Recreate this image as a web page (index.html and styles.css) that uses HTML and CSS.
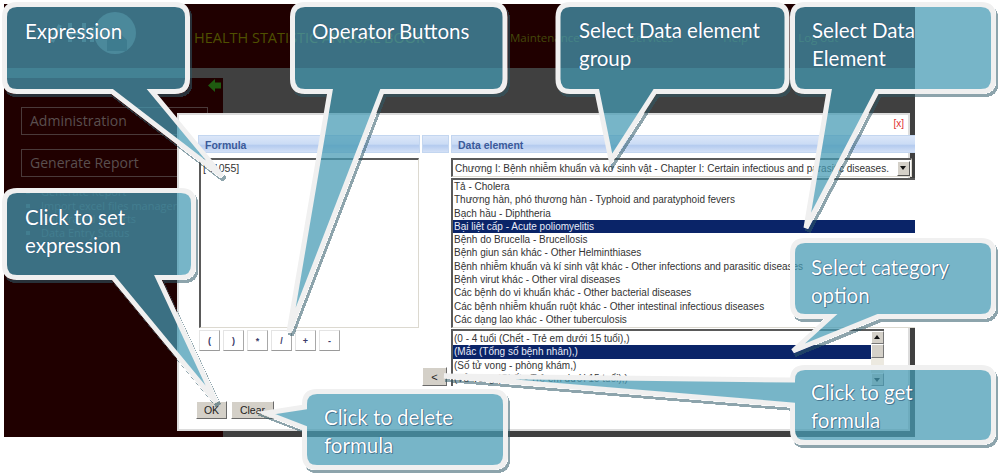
FILE: index.html
```html
<!DOCTYPE html>
<html lang="en">
<head>
  <meta charset="UTF-8">
  <title>Formula dialog help</title>
  <link rel="stylesheet" href="styles.css">
</head>
<body>
  <div class="screen">
    <header class="topbar">
      <svg class="logo" width="100" height="50" viewBox="0 0 100 50">
        <circle cx="73" cy="24" r="21" fill="#5a5a5a"/>
        <path d="M10 33 L18 16 M28 33 V14 M28 24 H42 M42 33 V14 M50 33 V18" fill="none" stroke="#5a5a5a" stroke-width="4"/>
        <path d="M65 31 L75 22 L85 31 V42 H65 Z" fill="#2c2c2c"/>
      </svg>
      <div class="app-title">HEALTH STATISTIC ANNUAL BOOK</div>
      <nav class="topnav">
        <span>Maintenance</span>
        <span>Services</span>
        <span>Help</span>
        <span>Log out</span>
      </nav>
    </header>

    <div class="main">
      <aside class="sidebar">
        <div class="collapse">
          <svg width="15" height="15" viewBox="0 0 15 15"><path d="M1 7.5 L8 1 V4.5 H14 V10.5 H8 V14 Z" fill="#1f5a10"/></svg>
        </div>
        <div class="side-btn">Administration</div>
        <div class="side-btn">Generate Report</div>
        <ul class="side-menu">
          <li>Generate Report</li>
          <li>Import excel files manager</li>
          <li>Generated reports</li>
          <li>Data Entry Status</li>
        </ul>
      </aside>
    </div>

    <div class="dialog">
      <div class="close-row">[x]</div>
      <div class="dialog-grid">
        <div class="formula-col">
          <div class="head">Formula</div>
          <div class="formula-box">[*.1055]</div>
          <div class="operators">
            <button class="op-btn">(</button>
            <button class="op-btn">)</button>
            <button class="op-btn">*</button>
            <button class="op-btn">/</button>
            <button class="op-btn">+</button>
            <button class="op-btn">-</button>
          </div>
          <div class="actions">
            <button class="grey-btn ok-btn">OK</button>
            <button class="grey-btn clear-btn">Clear</button>
          </div>
        </div>

        <div class="middle-col">
          <div class="head"></div>
          <button class="grey-btn get-btn">&lt;</button>
        </div>

        <div class="data-col">
          <div class="head">Data element</div>
          <div class="group-select">
            <span>Chương I: Bệnh nhiễm khuẩn và kớ sinh vật - Chapter I: Certain infectious and parasitic diseases.</span>
            <i class="arrow-btn"></i>
          </div>
          <ul class="list elements">
            <li>Tả - Cholera</li>
            <li>Thương hàn, phó thương hàn - Typhoid and paratyphoid fevers</li>
            <li>Bạch hầu - Diphtheria</li>
            <li class="selected">Bại liệt cấp - Acute poliomyelitis</li>
            <li>Bệnh do Brucella - Brucellosis</li>
            <li>Bệnh giun sán khác - Other Helminthiases</li>
            <li>Bệnh nhiễm khuẩn và kí sinh vật khác - Other infections and parasitic diseases</li>
            <li>Bệnh virut khác - Other viral diseases</li>
            <li>Các bệnh do vi khuẩn khác - Other bacterial diseases</li>
            <li>Các bệnh nhiễm khuẩn ruột khác - Other intestinal infectious diseases</li>
            <li>Các dạng lao khác - Other tuberculosis</li>
          </ul>
          <div class="category-box">
            <ul class="list categories">
              <li>(0 - 4 tuổi (Chết - Trẻ em dưới 15 tuổi),)</li>
              <li class="selected">(Mắc (Tổng số bệnh nhân),)</li>
              <li>(Số tử vong - phòng khám,)</li>
              <li>(Tử vong (Chết - Trẻ em dưới 15 tuổi),)</li>
            </ul>
            <div class="scrollbar">
              <i class="sb-up"></i>
              <i class="sb-thumb"></i>
              <i class="sb-down"></i>
            </div>
          </div>
        </div>
      </div>
    </div>
  </div>

  <!-- callouts drawn over the screenshot -->
  <svg class="callouts" width="998" height="475" viewBox="0 0 998 475">
    <defs>
      <filter id="bubble-shadow" x="-10%" y="-10%" width="125%" height="125%">
        <feComponentTransfer in="SourceAlpha" result="solid">
          <feFuncA type="linear" slope="20"/>
        </feComponentTransfer>
        <feOffset in="solid" dx="2" dy="3" result="moved"/>
        <feFlood flood-color="#2f5a68" flood-opacity="0.55"/>
        <feComposite in2="moved" operator="in" result="shade"/>
        <feComposite in="shade" in2="solid" operator="out" result="outer"/>
        <feMerge>
          <feMergeNode in="outer"/>
          <feMergeNode in="SourceGraphic"/>
        </feMerge>
      </filter>
    </defs>
    <path class="bubble" d="M17 4.5 H175 Q187.5 4.5 187.5 17 V79 Q187.5 91.5 175 91.5 H152 L222 176 L112 91.5 H17 Q4.5 91.5 4.5 79 V17 Q4.5 4.5 17 4.5 Z"/>
    <path class="bubble" d="M305 4.5 H493 Q505 4.5 505 17 V79 Q505 91.5 493 91.5 H382 L289 332 L330 91.5 H305 Q292.5 91.5 292.5 79 V17 Q292.5 4.5 305 4.5 Z"/>
    <path class="bubble" d="M570 4.5 H775 Q787 4.5 787 17 V79 Q787 91.5 775 91.5 H655 L611 160 L597 91.5 H570 Q558 91.5 558 79 V17 Q558 4.5 570 4.5 Z"/>
    <path class="bubble" d="M805 4.5 H981 Q993.5 4.5 993.5 17 V79 Q993.5 91.5 981 91.5 H877 L806 228 L829 91.5 H805 Q792.5 91.5 792.5 79 V17 Q792.5 4.5 805 4.5 Z"/>
    <path class="bubble" d="M17 190.5 H181 Q193.5 190.5 193.5 203 V265 Q193.5 277.5 181 277.5 H158 L216 402 L113 277.5 H17 Q4.5 277.5 4.5 265 V203 Q4.5 190.5 17 190.5 Z"/>
    <path class="bubble" d="M317 391.5 H493 Q505.5 391.5 505.5 404 V455 Q505.5 467.5 493 467.5 H317 Q304.5 467.5 304.5 455 V428 L266 413 L304.5 407 V404 Q304.5 391.5 317 391.5 Z"/>
    <path class="bubble" d="M805 240.5 H981 Q993.5 240.5 993.5 253 V304 Q993.5 316.5 981 316.5 H878 L793 351 L831 316.5 H805 Q792.5 316.5 792.5 304 V253 Q792.5 240.5 805 240.5 Z"/>
    <path class="bubble" d="M805 367.5 H981 Q993.5 367.5 993.5 380 V430 Q993.5 442.5 981 442.5 H805 Q792.5 442.5 792.5 430 V405 L444 376 L792.5 380 Q792.5 367.5 805 367.5 Z"/>
  </svg>

  <div class="label label-expression">Expression</div>
  <div class="label label-operators">Operator Buttons</div>
  <div class="label label-group">Select Data element group</div>
  <div class="label label-element">Select Data Element</div>
  <div class="label label-set">Click to set expression</div>
  <div class="label label-delete soft">Click to delete formula</div>
  <div class="label label-category soft">Select category option</div>
  <div class="label label-get soft">Click to get formula</div>
</body>
</html>
```

FILE: styles.css
```css
html, body {
  margin: 0;
  height: 475px;
  overflow: hidden;
  background: #ffffff;
}

body {
  position: relative;
  font-family: "Liberation Sans", sans-serif;
}

ul {
  margin: 0;
  padding: 0;
  list-style: none;
}

button {
  margin: 0;
  padding: 0;
  font-family: inherit;
}

.screen {
  position: absolute;
  left: 4px;
  top: 4px;
  width: 911px;
  height: 433px;
  overflow: hidden;
  display: flex;
  flex-direction: column;
  background: #404040;
}

.topbar {
  height: 64px;
  flex: none;
  display: flex;
  align-items: center;
  background: #200000;
}

.logo {
  margin-left: 38px;
  margin-right: 52px;
  margin-top: -4px;
}

.app-title {
  font-family: "Open Sans", sans-serif;
  font-size: 14.5px;
  color: #4f5000;
  width: 316px;
  white-space: nowrap;
  margin-top: 3px;
}

.topnav {
  display: flex;
  gap: 50px;
  font-family: "Open Sans", sans-serif;
  font-size: 11.5px;
  color: #44480a;
  margin-top: 3px;
}

.main {
  flex: 1;
  padding-top: 10px;
  display: flex;
}

.sidebar {
  width: 219px;
  background: #200000;
  padding: 0 15px 0 17px;
  box-sizing: border-box;
  position: relative;
}

.collapse {
  height: 15px;
  display: flex;
  justify-content: flex-end;
  margin-right: -14px;
  margin-bottom: 14px;
}

.side-btn {
  height: 26px;
  line-height: 26px;
  margin-bottom: 14px;
  padding-left: 8px;
  border: 1px solid #4a3a3a;
  font-family: "Open Sans", sans-serif;
  font-size: 14px;
  color: #5a4f4f;
}

.side-menu {
  font-family: "Open Sans", sans-serif;
  font-size: 11px;
  color: #3c3232;
  padding-left: 20px;
  margin-top: -6px;
  list-style: square;
}

.side-menu li {
  height: 13.6px;
  line-height: 13.6px;
}

.dialog {
  position: absolute;
  left: 175px;
  top: 111px;
  width: 729px;
  height: 314px;
  background: #ffffff;
  box-shadow: 0 0 0 2px #dcdcdc;
  font-family: "Liberation Sans", sans-serif;
}

.close-row {
  height: 20px;
  text-align: right;
  padding-right: 4px;
  font-size: 10px;
  line-height: 18px;
  color: #e03030;
}

.dialog-grid {
  display: grid;
  grid-template-columns: 222px 27px 470px;
  column-gap: 2px;
  margin-left: 19px;
  align-items: start;
}

.head {
  height: 18px;
  line-height: 18px;
  padding-left: 6px;
  border: 1px solid #c3d6f0;
  box-sizing: border-box;
  background: linear-gradient(#dbe6f8 0%, #cbdcf5 50%, #b4cbef 60%, #d3e0f6 100%);
  font-size: 10.5px;
  font-weight: bold;
  color: #3a5a9a;
}

.formula-box {
  width: 220px;
  height: 170px;
  margin: 5px 0 0 1px;
  padding: 2px 2px;
  box-sizing: border-box;
  border: 1px solid #dcd9d0;
  border-top: 2px solid #5a5a5a;
  border-left: 2px solid #5a5a5a;
  font-size: 10.5px;
  line-height: 13px;
  color: #333333;
}

.operators {
  display: flex;
  margin: 2px 0 0 1px;
  gap: 3px;
}

.op-btn {
  width: 21px;
  height: 21px;
  background: #ffffff;
  border: 1px solid #e4e4e4;
  border-right-color: #a8a8a8;
  border-bottom-color: #9a9a9a;
  font-size: 9px;
  font-weight: bold;
  color: #3a3a6a;
}

.actions {
  display: flex;
  gap: 4px;
  margin-top: 50px;
  margin-left: -2px;
}

.grey-btn {
  background: #d4d0c8;
  border: 1px solid #ffffff;
  border-right-color: #6a6a6a;
  border-bottom-color: #6a6a6a;
  font-size: 10.5px;
  color: #222222;
}

.ok-btn {
  width: 31px;
  height: 18px;
}

.clear-btn {
  width: 43px;
  height: 18px;
}

.middle-col {
  display: flex;
  flex-direction: column;
}

.get-btn {
  width: 25px;
  height: 19px;
  margin: 214px 0 0 0;
  font-size: 11px;
}

.group-select {
  width: 461px;
  height: 19px;
  margin: 5px 0 0 0;
  padding-left: 2px;
  padding-right: 1px;
  box-sizing: border-box;
  border: 1px solid #dcd9d0;
  border-top: 2px solid #5a5a5a;
  border-left: 2px solid #5a5a5a;
  display: flex;
  align-items: center;
  justify-content: space-between;
  font-size: 10px;
  color: #333333;
  white-space: nowrap;
  background: #ffffff;
}

.arrow-btn {
  flex: none;
  width: 13px;
  height: 15px;
  background: #d4d0c8;
  border: 1px solid #ffffff;
  border-right-color: #555555;
  border-bottom-color: #555555;
  box-sizing: border-box;
  position: relative;
}

.arrow-btn::after {
  content: "";
  position: absolute;
  left: 2px;
  top: 4px;
  border: 3.5px solid transparent;
  border-top: 4px solid #111111;
}

.list {
  font-size: 10px;
  color: #333333;
  white-space: nowrap;
}

.list li {
  height: 13.3px;
  line-height: 13.3px;
  padding-left: 1px;
}

.list .selected {
  background: #0a2468;
  color: #e8ecf8;
}

.elements {
  height: 150px;
  margin: 1px 0 0 0;
  box-sizing: border-box;
  background: #ffffff;
  border-top: 2px solid #5a5a5a;
  border-left: 2px solid #5a5a5a;
  border-bottom: 1px solid #dcd9d0;
}

.category-box {
  width: 433px;
  height: 57px;
  margin: 1px 0 0 0;
  box-sizing: border-box;
  border-top: 2px solid #5a5a5a;
  border-left: 2px solid #5a5a5a;
  display: flex;
  overflow: hidden;
}

.categories {
  flex: 1;
  padding-top: 1px;
}

.scrollbar {
  width: 13px;
  flex: none;
  background: #ece9e0;
  display: flex;
  flex-direction: column;
}

.sb-up, .sb-down {
  height: 13px;
  background: #d4d0c8;
  border: 1px solid #ffffff;
  border-right-color: #777777;
  border-bottom-color: #777777;
  box-sizing: border-box;
  position: relative;
}

.sb-up::after {
  content: "";
  position: absolute;
  left: 2px;
  top: 0;
  border: 3.5px solid transparent;
  border-bottom: 4px solid #111111;
}

.sb-down::after {
  content: "";
  position: absolute;
  left: 2px;
  top: 4px;
  border: 3.5px solid transparent;
  border-top: 4px solid #111111;
}

.sb-down {
  margin-top: auto;
}

.sb-thumb {
  height: 14px;
  background: #d4d0c8;
  border: 1px solid #ffffff;
  border-right-color: #777777;
  border-bottom-color: #777777;
  box-sizing: border-box;
}

.callouts {
  position: absolute;
  left: 0;
  top: 0;
}

.bubble {
  fill: rgba(70, 153, 179, 0.73);
  stroke: #f0f0f0;
  stroke-width: 5;
  stroke-linejoin: miter;
  filter: url(#bubble-shadow);
}

.label {
  position: absolute;
  width: 195px;
  font-family: "Lato", sans-serif;
  font-size: 20.5px;
  line-height: 28px;
  color: #ffffff;
  text-shadow: 0 0 1px #1b3f70;
}

.soft {
  text-shadow: 1px 1px 0 rgba(40, 80, 110, 0.55), 0 0 1px #1b3f70;
}

.label-expression { left: 25px; top: 17px; }
.label-operators { left: 312px; top: 17px; }
.label-group { left: 579px; top: 16px; }
.label-element { left: 812px; top: 16px; width: 110px; }
.label-set { left: 25px; top: 203px; }
.label-delete { left: 324px; top: 403px; width: 160px; }
.label-category { left: 811px; top: 253px; width: 160px; }
.label-get { left: 811px; top: 378px; width: 110px; }
```
